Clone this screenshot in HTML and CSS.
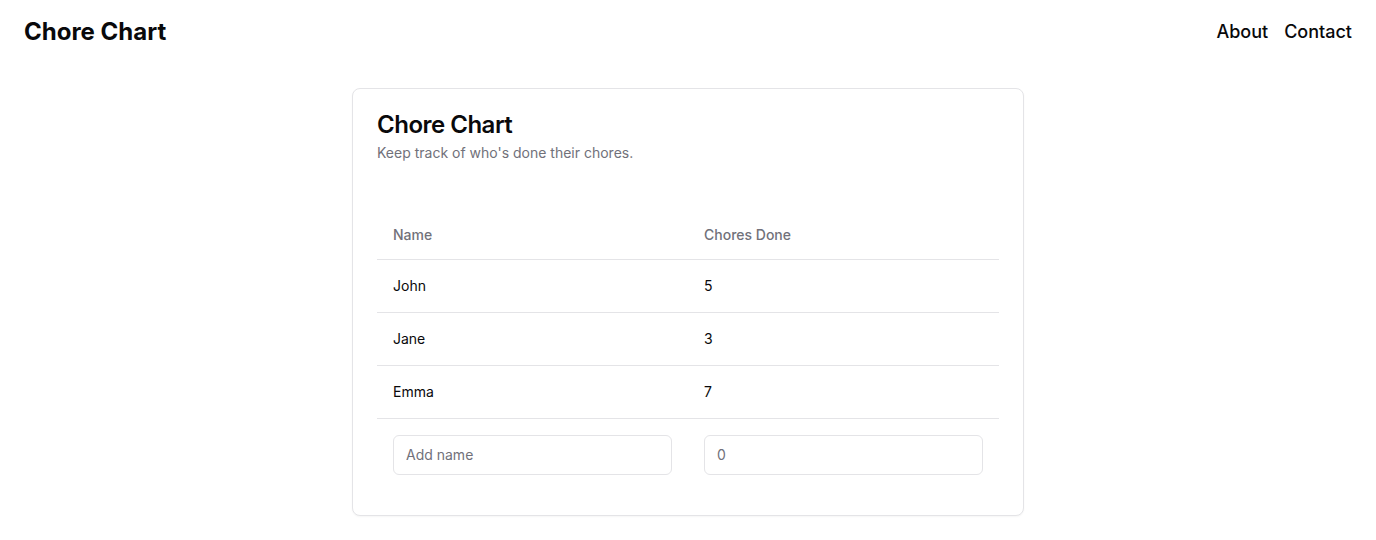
FILE: index.html
```html
<!DOCTYPE html>
<html lang="en">
<head>
<meta charset="utf-8">
<title>Chore Chart</title>
<link rel="stylesheet" href="styles.css">
</head>
<body>
<header class="topbar">
  <div class="brand">Chore Chart</div>
  <nav class="nav">
    <a href="#">About</a>
    <a href="#">Contact</a>
  </nav>
</header>
<main class="main">
  <section class="card">
    <div class="card-header">
      <h1 class="card-title">Chore Chart</h1>
      <p class="card-desc">Keep track of who's done their chores.</p>
    </div>
    <div class="card-content">
      <table class="table">
        <thead>
          <tr><th>Name</th><th>Chores Done</th></tr>
        </thead>
        <tbody>
          <tr><td>John</td><td>5</td></tr>
          <tr><td>Jane</td><td>3</td></tr>
          <tr><td>Emma</td><td>7</td></tr>
          <tr class="input-row">
            <td><input class="input" type="text" placeholder="Add name"></td>
            <td><input class="input" type="number" placeholder="0"></td>
          </tr>
        </tbody>
      </table>
    </div>
  </section>
</main>
</body>
</html>
```
FILE: styles.css
```css
* { box-sizing: border-box; }
html, body { margin: 0; padding: 0; background: #fff; }
body {
  font-family: Inter, "Noto Sans", sans-serif;
  color: #09090b;
}
.topbar {
  display: flex;
  align-items: center;
  justify-content: space-between;
  padding: 16px 24px;
  height: 64px;
}
.brand {
  font-size: 24px;
  line-height: 32px;
  font-weight: 700;
}
.nav {
  display: flex;
  gap: 16px;
}
.nav a {
  font-size: 18px;
  line-height: 28px;
  font-weight: 500;
  color: #09090b;
  text-decoration: none;
}
.main {
  padding: 24px 0;
}
.card {
  width: 672px;
  margin: 0 auto;
  border: 1px solid #e4e4e7;
  border-radius: 8px;
  background: #fff;
  box-shadow: 0 1px 2px rgba(0,0,0,0.04);
}
.card-header {
  padding: 24px 24px 0 24px;
  display: flex;
  flex-direction: column;
  gap: 6px;
}
.card-title {
  margin: 0;
  font-size: 24px;
  line-height: 24px;
  font-weight: 600;
  letter-spacing: -0.5px;
}
.card-desc {
  margin: 0;
  font-size: 14px;
  line-height: 20px;
  color: #71717a;
}
.card-content {
  padding: 48px 24px 24px 24px;
}
.table {
  width: 100%;
  border-collapse: collapse;
  font-size: 14px;
  table-layout: fixed;
}
.table th {
  height: 48px;
  padding: 0 16px;
  text-align: left;
  vertical-align: middle;
  font-weight: 500;
  color: #71717a;
  border-bottom: 1px solid #e4e4e7;
}
.table td {
  padding: 16px;
  line-height: 20px;
  vertical-align: middle;
  border-bottom: 1px solid #e4e4e7;
}
.table tr.input-row td {
  border-bottom: none;
}
.input {
  display: block;
  width: 100%;
  height: 40px;
  padding: 8px 12px;
  border: 1px solid #e4e4e7;
  border-radius: 6px;
  font-family: inherit;
  font-size: 14px;
  color: #09090b;
  background: #fff;
  outline: none;
}
.input::placeholder { color: #71717a; }
.input[type=number]::-webkit-inner-spin-button,
.input[type=number]::-webkit-outer-spin-button { -webkit-appearance: none; margin: 0; }
```
